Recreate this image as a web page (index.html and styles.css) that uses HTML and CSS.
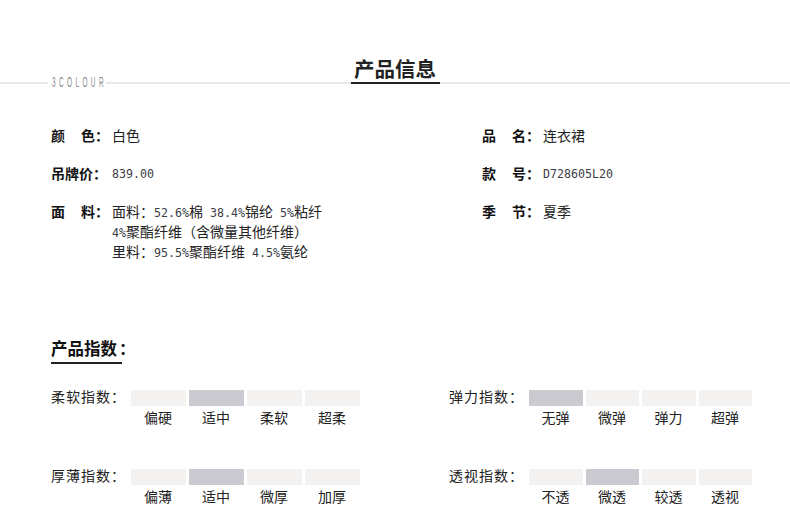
FILE: index.html
```html
<!DOCTYPE html>
<html lang="zh">
<head>
<meta charset="utf-8">
<title>产品信息</title>
<link rel="stylesheet" href="styles.css">
</head>
<body>
<header class="head">
  <span class="brand"><span class="brand-t">3COLOUR</span></span>
  <h1 class="title">产品信息</h1>
</header>
<section class="info">
  <div class="col">
    <div class="row"><span class="key">颜<i class="sp"></i>色：</span><span class="val">白色</span></div>
    <div class="row"><span class="key">吊牌价：</span><span class="val num">839.00</span></div>
    <div class="row"><span class="key">面<i class="sp"></i>料：</span><span class="val">面料：<b class="num">52.6%</b>棉<b class="num"> 38.4%</b>锦纶<b class="num"> 5%</b>粘纤<br><b class="num">4%</b>聚酯纤维（含微量其他纤维）<br>里料：<b class="num">95.5%</b>聚酯纤维<b class="num"> 4.5%</b>氨纶</span></div>
  </div>
  <div class="col col-r">
    <div class="row"><span class="key">品<i class="sp"></i>名：</span><span class="val">连衣裙</span></div>
    <div class="row"><span class="key">款<i class="sp"></i>号：</span><span class="val num">D728605L20</span></div>
    <div class="row"><span class="key">季<i class="sp"></i>节：</span><span class="val">夏季</span></div>
  </div>
</section>
<section class="index">
  <h2 class="sub"><span class="sub-t">产品指数</span><span class="sub-c">：</span></h2>
  <div class="grid">
    <div class="meter">
      <span class="m-name">柔软指数：</span>
      <div class="cells"><span class="c"></span><span class="c on"></span><span class="c"></span><span class="c"></span></div>
      <div class="labels"><span>偏硬</span><span>适中</span><span>柔软</span><span>超柔</span></div>
    </div>
    <div class="meter r">
      <span class="m-name">弹力指数：</span>
      <div class="cells"><span class="c on"></span><span class="c"></span><span class="c"></span><span class="c"></span></div>
      <div class="labels"><span>无弹</span><span>微弹</span><span>弹力</span><span>超弹</span></div>
    </div>
    <div class="meter">
      <span class="m-name">厚薄指数：</span>
      <div class="cells"><span class="c"></span><span class="c on"></span><span class="c"></span><span class="c"></span></div>
      <div class="labels"><span>偏薄</span><span>适中</span><span>微厚</span><span>加厚</span></div>
    </div>
    <div class="meter r">
      <span class="m-name">透视指数：</span>
      <div class="cells"><span class="c"></span><span class="c on"></span><span class="c"></span><span class="c"></span></div>
      <div class="labels"><span>不透</span><span>微透</span><span>较透</span><span>透视</span></div>
    </div>
  </div>
</section>
</body>
</html>
```
FILE: styles.css
```css
* { box-sizing: border-box; }
html, body { margin: 0; padding: 0; }
body {
  width: 790px;
  height: 511px;
  overflow: hidden;
  background: #fff;
  color: #222;
  font-family: "Noto Sans CJK SC", "Liberation Sans", sans-serif;
  font-size: 14px;
}
.head {
  height: 84px;
  padding-top: 56px;
  position: relative;
  display: flex;
  justify-content: center;
  background: linear-gradient(#e8e8e8, #e8e8e8) 0 82px / 100% 2px no-repeat;
}
.brand {
  position: absolute;
  left: 48px;
  top: 76px;
  width: 58px;
  height: 13px;
  padding-left: 4px;
  background: #fff;
}
.brand-t {
  display: block;
  width: 120px;
  font-family: "Liberation Sans", sans-serif;
  font-size: 14px;
  line-height: 13px;
  letter-spacing: 7.4px;
  color: #8a8a8a;
  transform: scaleX(0.46);
  transform-origin: left center;
}
.title {
  margin: 0;
  width: 89px;
  height: 28px;
  border-bottom: 2px solid #222;
  text-align: center;
  font-size: 20.5px;
  line-height: 25px;
  font-weight: 700;
  color: #222;
}
.info {
  display: flex;
  padding: 41px 0 0 51px;
}
.col { width: 431px; }
.col-r { width: 300px; }
.row {
  display: flex;
  margin-bottom: 18px;
  line-height: 20px;
}
.key {
  width: 61px;
  flex: none;
  font-weight: 700;
  color: #111;
}
.sp { display: inline-block; width: 16px; }
.val { color: #222; line-height: 20px; }
.num {
  font-family: "DejaVu Sans Mono", monospace;
  font-size: 11.63px;
  font-weight: 400;
  color: #3a4046;
  line-height: 1;
  white-space: pre;
}
.val.num { line-height: 22px; height: 20px; }
.index { padding: 0 0 0 51px; margin-top: 59px; }
.sub {
  margin: 0 0 26px;
  font-size: 16.5px;
  line-height: 20px;
  font-weight: 700;
  color: #111;
  height: 26px;
  display: flex;
}
.sub-t {
  display: block;
  width: 71px;
  height: 26px;
  border-bottom: 2px solid #222;
  white-space: nowrap;
}
.sub-c { margin-left: -3px; }
.grid {
  display: grid;
  grid-template-columns: 398px 310px;
  row-gap: 34px;
}
.meter {
  display: grid;
  grid-template-columns: 80px 229px;
  grid-template-rows: 16px 29px;
}
.m-name {
  line-height: 13px;
  letter-spacing: 1px;
  color: #222;
  white-space: nowrap;
}
.cells { display: grid; grid-template-columns: repeat(4, 55px); column-gap: 3px; }
.c { background: #f3f2f1; }
.c.on { background: #cbcad0; }
.labels {
  grid-column: 2;
  display: grid;
  grid-template-columns: repeat(4, 55px);
  column-gap: 3px;
  padding-right: 1px;
  text-align: center;
  line-height: 23px;
  color: #222;
}
.labels span { margin-right: 1px; }
.meter.r .cells, .meter.r .labels { grid-template-columns: 54px 53px 54px 53px; }
```
